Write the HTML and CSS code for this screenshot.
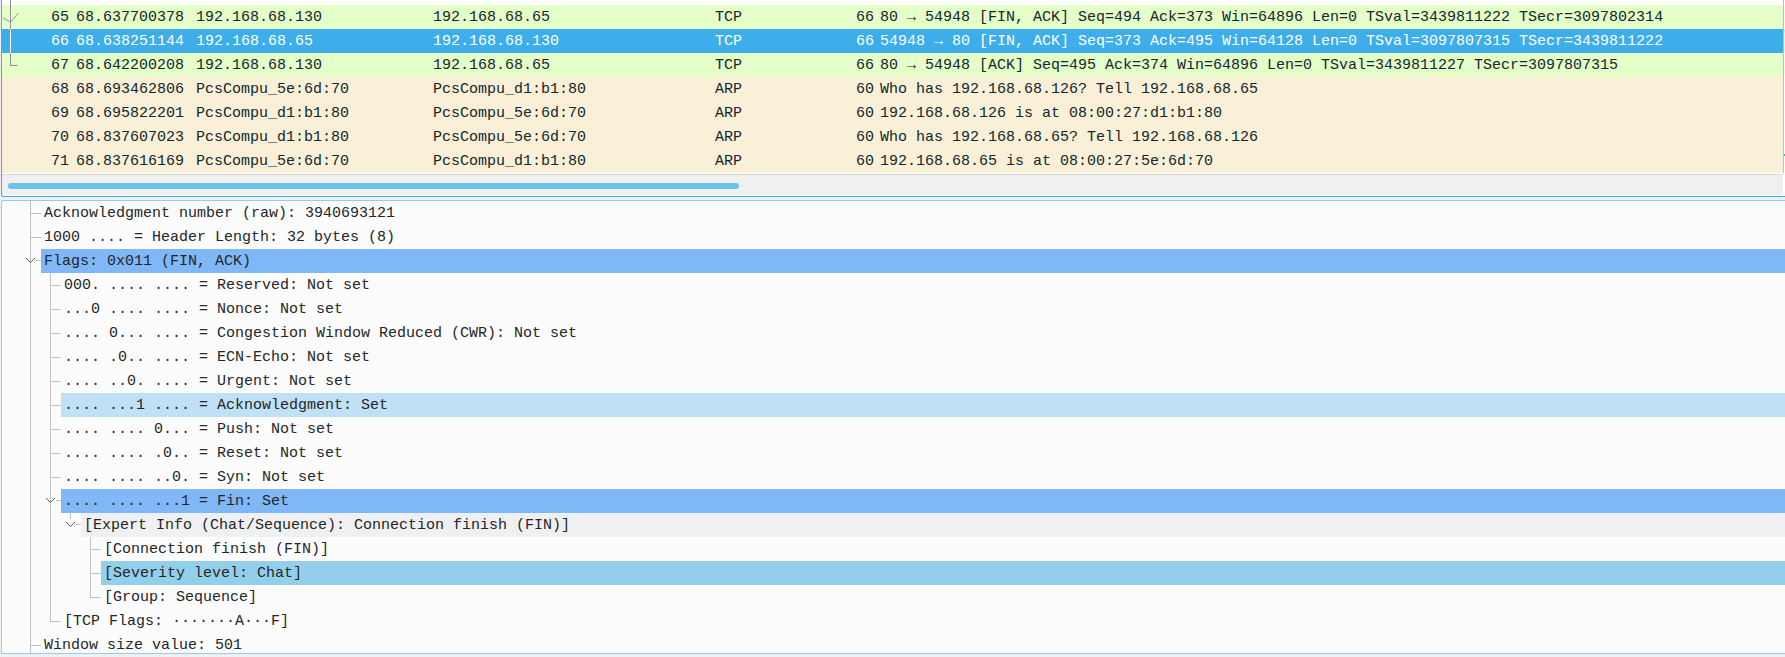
FILE: index.html
```html
<!DOCTYPE html>
<html>
<head>
<meta charset="utf-8">
<link rel="stylesheet" href="styles.css">
</head>
<body>
<div class="app">
  <div class="plist-pane">
    <div class="plist-col">
      <div class="plist">
        <svg class="conv" width="24" height="80" viewBox="0 0 24 80">
          <line x1="8.5" y1="0" x2="8.5" y2="29" stroke="#8c9094" stroke-width="1"/>
          <line x1="8.5" y1="29" x2="8.5" y2="53" stroke="#ffffff" stroke-width="1"/>
          <line x1="8.5" y1="53" x2="8.5" y2="65.5" stroke="#8c9094" stroke-width="1"/>
          <line x1="8" y1="65.5" x2="15.5" y2="65.5" stroke="#8c9094" stroke-width="1"/>
          <polyline points="1,18 8.5,22 16.5,13" fill="none" stroke="#8c9094" stroke-width="1"/>
        </svg>
        <div class="blank"></div>
        <div class="prow http">
          <span class="c no">65</span><span class="c time">68.637700378</span><span class="c src">192.168.68.130</span><span class="c dst">192.168.68.65</span><span class="c proto">TCP</span><span class="c len">66</span><span class="c info">80 → 54948 [FIN, ACK] Seq=494 Ack=373 Win=64896 Len=0 TSval=3439811222 TSecr=3097802314</span>
        </div>
        <div class="prow sel">
          <span class="c no">66</span><span class="c time">68.638251144</span><span class="c src">192.168.68.65</span><span class="c dst">192.168.68.130</span><span class="c proto">TCP</span><span class="c len">66</span><span class="c info">54948 → 80 [FIN, ACK] Seq=373 Ack=495 Win=64128 Len=0 TSval=3097807315 TSecr=3439811222</span>
        </div>
        <div class="prow http">
          <span class="c no">67</span><span class="c time">68.642200208</span><span class="c src">192.168.68.130</span><span class="c dst">192.168.68.65</span><span class="c proto">TCP</span><span class="c len">66</span><span class="c info">80 → 54948 [ACK] Seq=495 Ack=374 Win=64896 Len=0 TSval=3439811227 TSecr=3097807315</span>
        </div>
        <div class="prow arp">
          <span class="c no">68</span><span class="c time">68.693462806</span><span class="c src">PcsCompu_5e:6d:70</span><span class="c dst">PcsCompu_d1:b1:80</span><span class="c proto">ARP</span><span class="c len">60</span><span class="c info">Who has 192.168.68.126? Tell 192.168.68.65</span>
        </div>
        <div class="prow arp">
          <span class="c no">69</span><span class="c time">68.695822201</span><span class="c src">PcsCompu_d1:b1:80</span><span class="c dst">PcsCompu_5e:6d:70</span><span class="c proto">ARP</span><span class="c len">60</span><span class="c info">192.168.68.126 is at 08:00:27:d1:b1:80</span>
        </div>
        <div class="prow arp">
          <span class="c no">70</span><span class="c time">68.837607023</span><span class="c src">PcsCompu_d1:b1:80</span><span class="c dst">PcsCompu_5e:6d:70</span><span class="c proto">ARP</span><span class="c len">60</span><span class="c info">Who has 192.168.68.65? Tell 192.168.68.126</span>
        </div>
        <div class="prow arp">
          <span class="c no">71</span><span class="c time">68.837616169</span><span class="c src">PcsCompu_5e:6d:70</span><span class="c dst">PcsCompu_d1:b1:80</span><span class="c proto">ARP</span><span class="c len">60</span><span class="c info">192.168.68.65 is at 08:00:27:5e:6d:70</span>
        </div>
        <div class="endgap"></div>
      </div>
      <div class="hbar"><div class="handle"></div></div>
    </div>
    <div class="vbar">
      <div class="vtrack">
        <div class="mark m1"></div>
        <div class="mark m2"></div>
      </div>
    </div>
  </div>

  <div class="tree-pane">
    <svg class="branches" width="120" height="460" viewBox="0 0 120 460">
      <g stroke="#bfc1c3" stroke-width="1" fill="none">
        <line x1="28.5" y1="0" x2="28.5" y2="460"/>
        <line x1="28" y1="12.5" x2="39" y2="12.5"/>
        <line x1="28" y1="36.5" x2="39" y2="36.5"/>
        <line x1="34" y1="59.5" x2="39" y2="59.5"/>
        <line x1="28" y1="444.5" x2="39" y2="444.5"/>

        <line x1="48.5" y1="72" x2="48.5" y2="420.5"/>
        <line x1="48" y1="84.5" x2="59" y2="84.5"/>
        <line x1="48" y1="108.5" x2="59" y2="108.5"/>
        <line x1="48" y1="132.5" x2="59" y2="132.5"/>
        <line x1="48" y1="156.5" x2="59" y2="156.5"/>
        <line x1="48" y1="180.5" x2="59" y2="180.5"/>
        <line x1="48" y1="204.5" x2="59" y2="204.5"/>
        <line x1="48" y1="228.5" x2="59" y2="228.5"/>
        <line x1="48" y1="252.5" x2="59" y2="252.5"/>
        <line x1="48" y1="276.5" x2="59" y2="276.5"/>
        <line x1="54" y1="299.5" x2="59" y2="299.5"/>
        <line x1="48" y1="420.5" x2="59" y2="420.5"/>

        <line x1="68.5" y1="312" x2="68.5" y2="318"/>
        <line x1="74" y1="323.5" x2="79" y2="323.5"/>

        <line x1="88.5" y1="336" x2="88.5" y2="396.5"/>
        <line x1="88" y1="348.5" x2="99" y2="348.5"/>
        <line x1="88" y1="372.5" x2="99" y2="372.5"/>
        <line x1="88" y1="396.5" x2="99" y2="396.5"/>
      </g>
      <g stroke="#5a5e62" stroke-width="1" fill="none">
        <polyline points="24,57 28.5,61.5 33,57"/>
        <polyline points="44,297 48.5,301.5 53,297"/>
        <polyline points="64,321 68.5,325.5 73,321"/>
      </g>
    </svg>
    <div class="node l0"><span class="label">Acknowledgment number (raw): 3940693121</span></div>
    <div class="node l0"><span class="label">1000 .... = Header Length: 32 bytes (8)</span></div>
    <div class="node l0"><span class="label chat">Flags: 0x011 (FIN, ACK)</span></div>
    <div class="node l1"><span class="label">000. .... .... = Reserved: Not set</span></div>
    <div class="node l1"><span class="label">...0 .... .... = Nonce: Not set</span></div>
    <div class="node l1"><span class="label">.... 0... .... = Congestion Window Reduced (CWR): Not set</span></div>
    <div class="node l1"><span class="label">.... .0.. .... = ECN-Echo: Not set</span></div>
    <div class="node l1"><span class="label">.... ..0. .... = Urgent: Not set</span></div>
    <div class="node l1"><span class="label hover">.... ...1 .... = Acknowledgment: Set</span></div>
    <div class="node l1"><span class="label">.... .... 0... = Push: Not set</span></div>
    <div class="node l1"><span class="label">.... .... .0.. = Reset: Not set</span></div>
    <div class="node l1"><span class="label">.... .... ..0. = Syn: Not set</span></div>
    <div class="node l1"><span class="label chat">.... .... ...1 = Fin: Set</span></div>
    <div class="node l2"><span class="label expert">[Expert Info (Chat/Sequence): Connection finish (FIN)]</span></div>
    <div class="node l3"><span class="label">[Connection finish (FIN)]</span></div>
    <div class="node l3"><span class="label selected">[Severity level: Chat]</span></div>
    <div class="node l3"><span class="label">[Group: Sequence]</span></div>
    <div class="node l1"><span class="label">[TCP Flags: ·······A···F]</span></div>
    <div class="node l0"><span class="label">Window size value: 501</span></div>
  </div>
</div>
</body>
</html>
```

FILE: styles.css
```css
html, body {
  margin: 0;
  padding: 0;
  width: 1785px;
  height: 657px;
  overflow: hidden;
  background: #eff0f1;
}

.app {
  padding-left: 1px;
  width: 1830px;
  font-family: "Liberation Mono", "DejaVu Sans Mono", monospace;
  font-size: 15px;
}

/* ---------- packet list ---------- */
.plist-pane {
  display: flex;
  height: 196px;
  border-left: 1px solid #3daee9;
  border-bottom: 1px solid #3daee9;
  border-bottom-left-radius: 3px;
  background: #ffffff;
}

.plist-col {
  width: 1781px;
  display: flex;
  flex-direction: column;
}

.plist {
  position: relative;
  height: 174px;
  background: #ffffff;
}

.conv {
  position: absolute;
  left: 0;
  top: 0;
  z-index: 2;
}

.blank {
  height: 5px;
}

.prow {
  display: flex;
  height: 24px;
  color: #12272e;
  white-space: pre;
}

.prow.http { background: #e4ffc7; }
.prow.arp { background: #faf0d7; }
.prow.sel { background: #3daee9; color: #ffffff; }

.c {
  display: block;
  overflow: hidden;
  box-sizing: border-box;
  height: 24px;
  padding-top: 1px;
  line-height: 24px;
}
.no { width: 70px; text-align: right; padding-right: 3px; }
.time { width: 120px; padding-left: 4px; }
.src { width: 237px; padding-left: 4px; }
.dst { width: 282px; padding-left: 4px; }
.proto { width: 119px; padding-left: 4px; }
.len { width: 47px; text-align: right; padding-right: 3px; }
.info { flex: 1; padding-left: 3px; }

.endgap {
  height: 1px;
}

.hbar {
  height: 21px;
  border-top: 1px solid #d4d5d6;
  background: #eff0f1;
  padding-top: 8px;
  padding-left: 6px;
  box-sizing: border-box;
}

.handle {
  width: 731px;
  height: 6px;
  border-radius: 3px;
  background: #6ec0ea;
}

.vbar {
  width: 40px;
  background: #ffffff;
}

.vtrack {
  position: relative;
  height: 173px;
  border-left: 1px solid #bcbec0;
}

.mark {
  position: absolute;
  left: 0;
  width: 2px;
  height: 2px;
}
.m1 { top: 30px; background: #c9e6f8; }
.m2 { top: 154px; height: 2px; background: #3daee9; }

/* ---------- tree ---------- */
.tree-pane {
  position: relative;
  margin-top: 3px;
  height: 452px;
  border-left: 1px solid #93cee9;
  border-top: 1px solid #93cee9;
  border-bottom: 1px solid #93cee9;
  border-top-left-radius: 3px;
  background: #fcfcfc;
  overflow: hidden;
  color: #232629;
}

.branches {
  position: absolute;
  left: 0;
  top: 0;
}

.node {
  display: flex;
  height: 24px;
  white-space: pre;
}

.node.l0 { padding-left: 39px; }
.node.l1 { padding-left: 59px; }
.node.l2 { padding-left: 79px; }
.node.l3 { padding-left: 99px; }

.label {
  flex: 1;
  box-sizing: border-box;
  height: 24px;
  padding-top: 1px;
  padding-left: 3px;
  line-height: 24px;
  overflow: hidden;
}

.label.chat { background: #80b7f7; }
.label.hover { background: #c0e0f5; }
.label.selected { background: #93cfeb; }
.label.expert { background: #eff0f1; }
```
